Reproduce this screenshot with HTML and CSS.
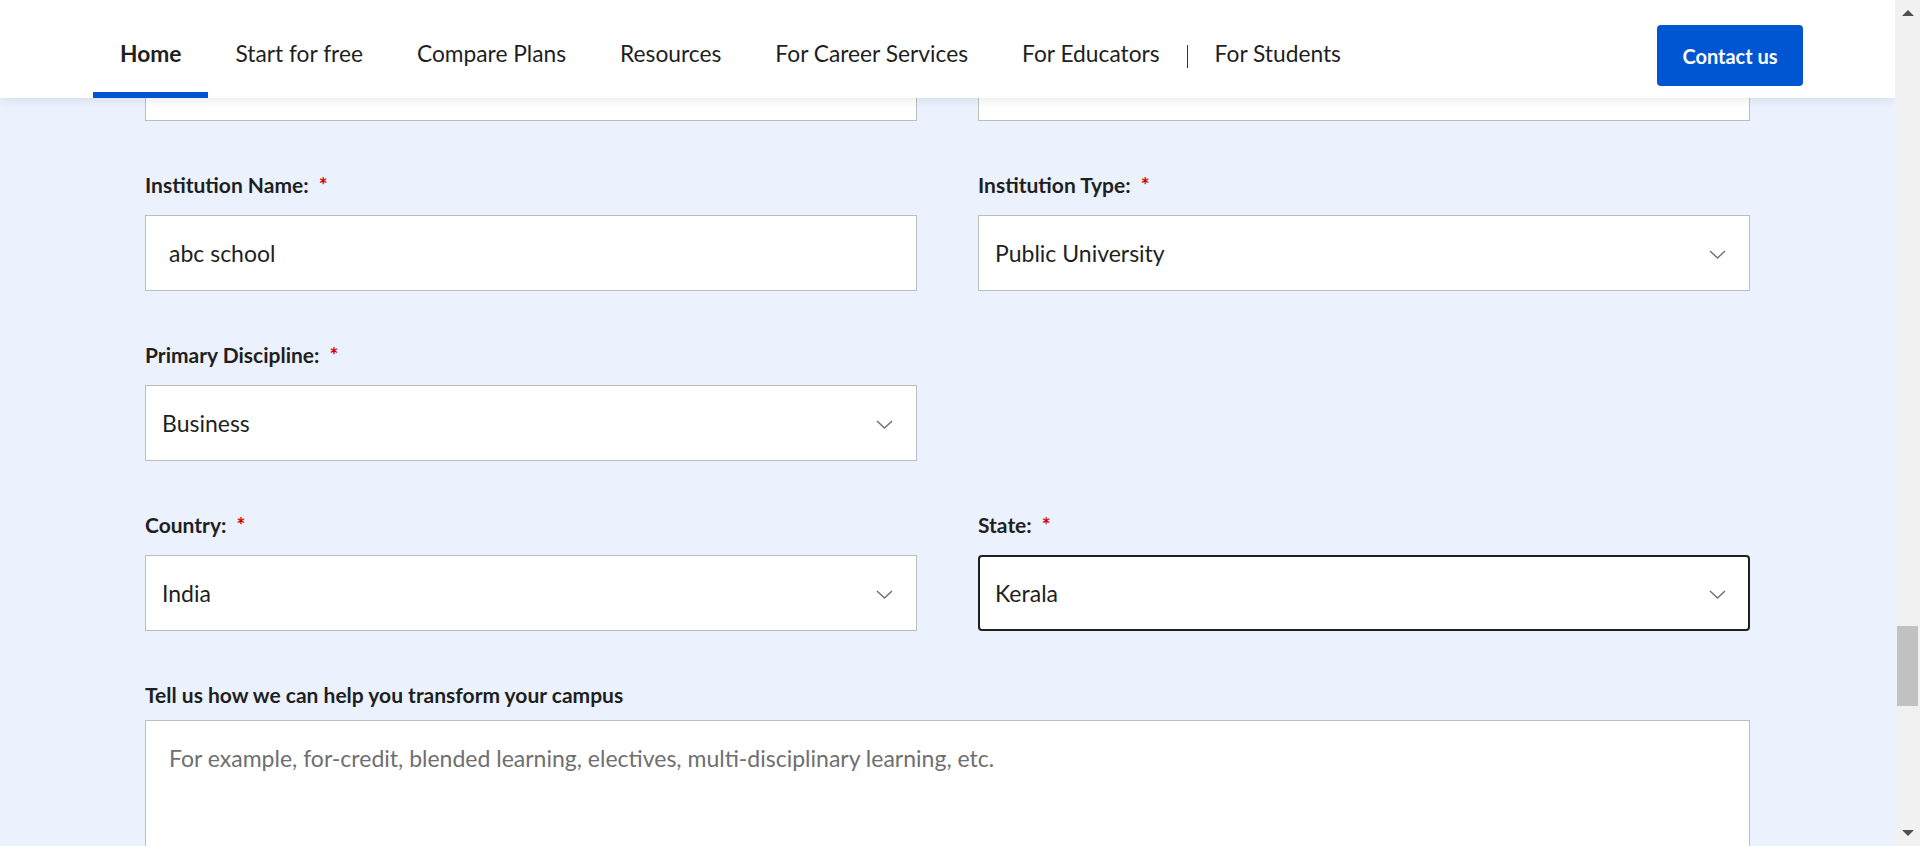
FILE: index.html
```html
<!DOCTYPE html>
<html lang="en">
<head>
<meta charset="utf-8">
<title>Coursera for Campus – Contact</title>
<link rel="stylesheet" href="styles.css">
</head>
<body>
<div class="screen">
  <div class="viewport">
    <header class="topbar">
      <nav class="nav">
        <a class="nav-item active" href="#">Home</a>
        <a class="nav-item" href="#">Start for free</a>
        <a class="nav-item" href="#">Compare Plans</a>
        <a class="nav-item" href="#">Resources</a>
        <a class="nav-item" href="#">For Career Services</a>
        <a class="nav-item" href="#">For Educators</a>
        <span class="nav-sep"></span>
        <a class="nav-item" href="#">For Students</a>
      </nav>
      <a class="btn-contact" href="#">Contact us</a>
    </header>

    <main class="form">
      <div class="field field-cut"><div class="box"></div></div>
      <div class="field field-cut"><div class="box"></div></div>

      <div class="field">
        <label class="label">Institution Name:<span class="req">*</span></label>
        <input class="box text-input" type="text" value="abc school">
      </div>
      <div class="field">
        <label class="label">Institution Type:<span class="req">*</span></label>
        <div class="box select"><span>Public University</span><svg class="chev" width="17" height="9" viewBox="0 0 17 9"><polyline points="1,1 8.5,8 16,1" fill="none" stroke="#6f6f6f" stroke-width="1.4"/></svg></div>
      </div>

      <div class="field">
        <label class="label">Primary Discipline:<span class="req">*</span></label>
        <div class="box select"><span>Business</span><svg class="chev" width="17" height="9" viewBox="0 0 17 9"><polyline points="1,1 8.5,8 16,1" fill="none" stroke="#6f6f6f" stroke-width="1.4"/></svg></div>
      </div>
      <div class="field"></div>

      <div class="field">
        <label class="label">Country:<span class="req">*</span></label>
        <div class="box select"><span>India</span><svg class="chev" width="17" height="9" viewBox="0 0 17 9"><polyline points="1,1 8.5,8 16,1" fill="none" stroke="#6f6f6f" stroke-width="1.4"/></svg></div>
      </div>
      <div class="field">
        <label class="label">State:<span class="req">*</span></label>
        <div class="box select focused"><span>Kerala</span><svg class="chev" width="17" height="9" viewBox="0 0 17 9"><polyline points="1,1 8.5,8 16,1" fill="none" stroke="#6f6f6f" stroke-width="1.4"/></svg></div>
      </div>

      <div class="field field-wide">
        <label class="label label-tight">Tell us how we can help you transform your campus</label>
        <textarea class="textarea" placeholder="For example, for-credit, blended learning, electives, multi-disciplinary learning, etc."></textarea>
      </div>
    </main>
  </div>

  <div class="scrollbar">
    <span class="sb-up"></span>
    <div class="sb-track"><div class="sb-thumb"></div></div>
    <span class="sb-down"></span>
  </div>
</div>
</body>
</html>
```

FILE: styles.css
```css
* { box-sizing: border-box; }

html, body {
  margin: 0;
  padding: 0;
  height: 846px;
  overflow: hidden;
}

body {
  font-family: Lato, "Open Sans", sans-serif;
  color: #1f1f1f;
  background: #ebf2fd;
}

.screen {
  display: flex;
  width: 1920px;
  height: 846px;
}

.viewport {
  position: relative;
  flex: 1;
  height: 846px;
  overflow: hidden;
  background: #ebf2fd;
}

/* ---------- header ---------- */
.topbar {
  position: absolute;
  top: 0;
  left: 0;
  right: 0;
  height: 98px;
  z-index: 5;
  background: #ffffff;
  box-shadow: 0 2px 10px rgba(0, 0, 0, 0.09);
  display: flex;
  justify-content: space-between;
  padding: 0 92px 0 93px;
}

.nav {
  display: flex;
  align-items: stretch;
}

.nav-item {
  display: flex;
  align-items: center;
  padding: 14px 27px 0;
  border-bottom: 6px solid transparent;
  font-size: 22.75px;
  color: #1f1f1f;
  text-decoration: none;
  white-space: nowrap;
}

.nav-item.active {
  font-weight: 700;
  border-bottom-color: #0056d2;
}

.nav-sep {
  align-self: center;
  width: 1px;
  height: 23px;
  margin-top: 15px;
  background: #333333;
}

.btn-contact {
  align-self: flex-start;
  margin-top: 25px;
  width: 146px;
  height: 61px;
  display: flex;
  align-items: center;
  justify-content: center;
  background: #0056d2;
  color: #ffffff;
  border-radius: 4px;
  font-size: 20px;
  font-weight: 700;
  text-decoration: none;
}

/* ---------- form ---------- */
.form {
  width: 1605px;
  margin: 45px auto 0;
  display: grid;
  grid-template-columns: 772px 772px;
  column-gap: 61px;
  row-gap: 52px;
}

.field {
  display: flex;
  flex-direction: column;
}

.field-wide {
  grid-column: 1 / 3;
}

.label {
  display: block;
  font-size: 21px;
  font-weight: 700;
  line-height: 24px;
  margin-bottom: 18px;
  color: #1f1f1f;
}

.label-tight {
  margin-bottom: 13px;
}

.req {
  color: #d30001;
  margin-left: 10px;
}

.box {
  height: 76px;
  background: #ffffff;
  border: 1px solid #bdbdbd;
}

.text-input {
  width: 100%;
  padding: 0 23px;
  font-family: inherit;
  font-size: 23px;
  color: #1f1f1f;
  outline: none;
}

.select {
  display: flex;
  align-items: center;
  justify-content: space-between;
  padding: 0 23px 0 16px;
  font-size: 23px;
  color: #1f1f1f;
}

.select.focused {
  border: 2px solid #1f1f1f;
  border-radius: 4px;
  padding: 0 22px 0 15px;
}

.chev {
  flex: none;
  margin-top: 3px;
}

.textarea {
  width: 100%;
  height: 220px;
  resize: none;
  background: #ffffff;
  border: 1px solid #bdbdbd;
  padding: 19px 23px;
  font-family: inherit;
  font-size: 23px;
  line-height: 36px;
  color: #1f1f1f;
  outline: none;
}

.textarea::placeholder {
  color: #6f6f6f;
}

/* ---------- scrollbar ---------- */
.scrollbar {
  width: 25px;
  height: 846px;
  background: #f1f1f1;
  display: flex;
  flex-direction: column;
  align-items: center;
}

.sb-up {
  width: 0;
  height: 0;
  margin-top: 10px;
  border-left: 6px solid transparent;
  border-right: 6px solid transparent;
  border-bottom: 6px solid #505050;
}

.sb-track {
  flex: 1;
  width: 100%;
  padding: 610px 2px 0 2px;
}

.sb-thumb {
  width: 21px;
  height: 80px;
  background: #c1c1c1;
}

.sb-down {
  width: 0;
  height: 0;
  margin-bottom: 10px;
  border-left: 6px solid transparent;
  border-right: 6px solid transparent;
  border-top: 6px solid #505050;
}
```
